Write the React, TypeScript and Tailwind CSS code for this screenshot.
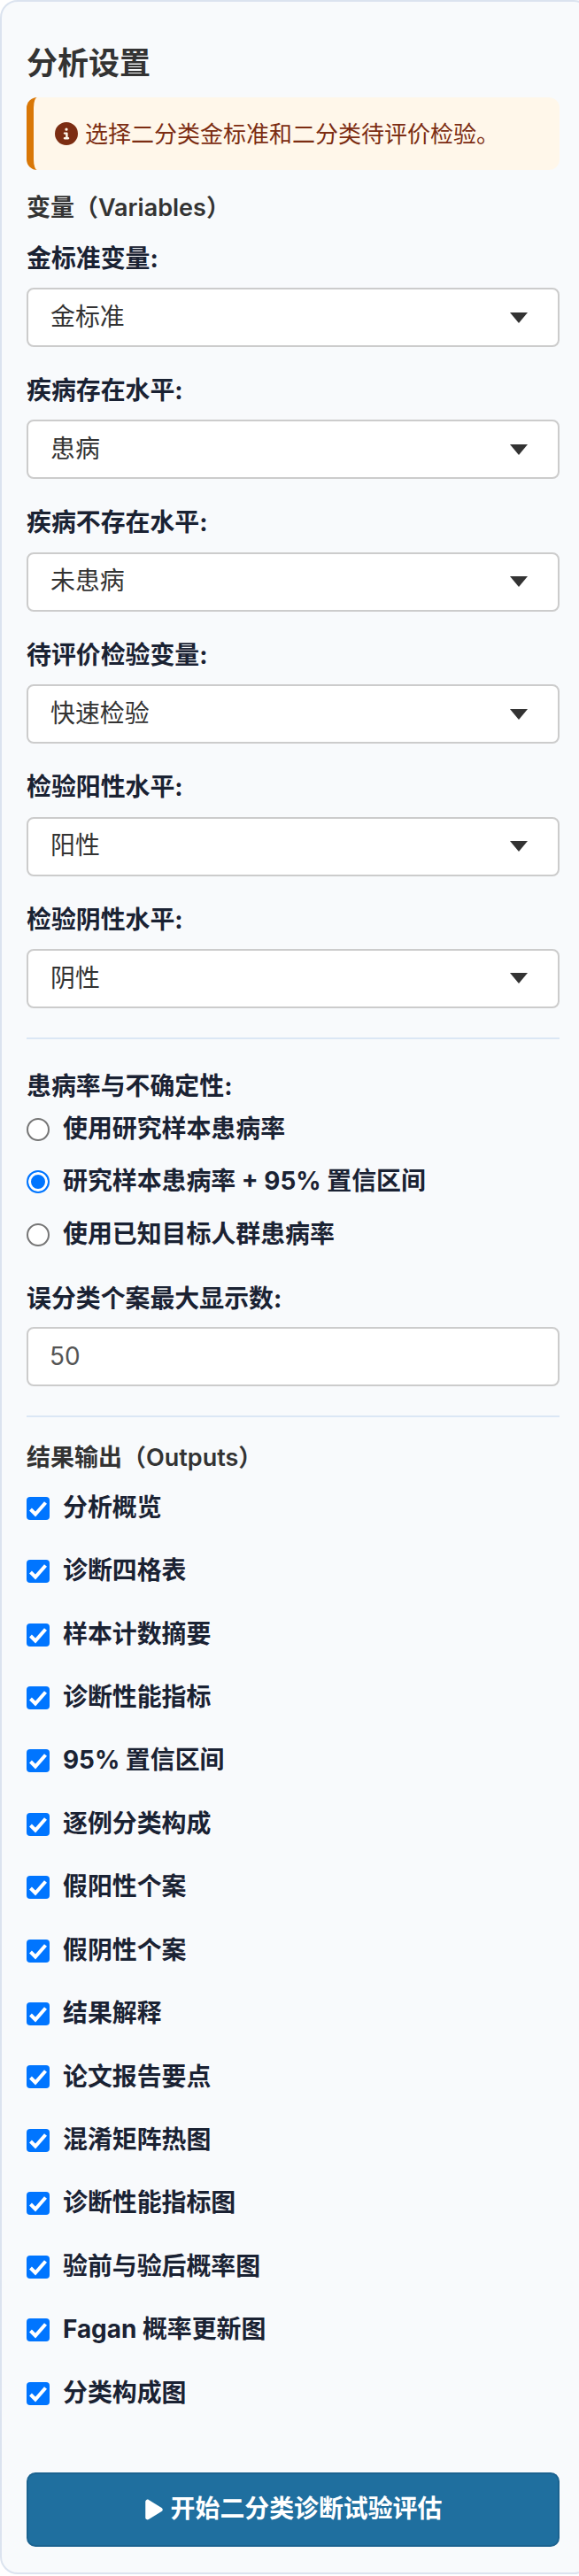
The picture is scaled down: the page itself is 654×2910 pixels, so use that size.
import React from 'react';

const font = "font-['Inter','Noto_Sans_CJK_SC',sans-serif]";

const selects = [
  { label: '金标准变量:', value: '金标准' },
  { label: '疾病存在水平:', value: '患病' },
  { label: '疾病不存在水平:', value: '未患病' },
  { label: '待评价检验变量:', value: '快速检验' },
  { label: '检验阳性水平:', value: '阳性' },
  { label: '检验阴性水平:', value: '阴性' },
];

const radios = ['使用研究样本患病率', '研究样本患病率 + 95% 置信区间', '使用已知目标人群患病率'];

const outputs = [
  '分析概览', '诊断四格表', '样本计数摘要', '诊断性能指标', '95% 置信区间',
  '逐例分类构成', '假阳性个案', '假阴性个案', '结果解释', '论文报告要点',
  '混淆矩阵热图', '诊断性能指标图', '验前与验后概率图', 'Fagan 概率更新图', '分类构成图',
];

function SelectField({ label, value }: { label: string; value: string }) {
  return (
    <div className="flex flex-col">
      <label className="h-[25px] flex items-center text-[27.9px] font-bold text-[#1a2233] mb-[20px]">{label}</label>
      <div className="h-[67px] bg-white border-2 border-[#cccccc] rounded-[8px] pl-[25px] pr-[34px] flex items-center justify-between text-[27.9px] text-[#333333]">
        <span>{value}</span>
        <span className="w-0 h-0 border-x-[10px] border-x-transparent border-t-[12px] border-t-[#333333]" />
      </div>
    </div>
  );
}

export default function App() {
  return (
    <div className={`w-[654px] h-[2910px] overflow-hidden bg-white ${font}`}>
      <div className="w-[668px] h-[2908px] bg-[#f8fafc] border-2 border-[#dbe3ef] rounded-[20px] px-[28px] pt-[50px]">
        <div className="w-[602px] flex flex-col">
          <h2 className="h-[38px] flex items-center text-[35px] font-semibold text-[#333333]">分析设置</h2>
          <div className="mt-[20px] h-[82px] bg-[#fff7ea] border-l-[8px] border-[#d97706] rounded-[12px] pl-[24px] flex items-center text-[26px] text-[#7c2d12]">
            <svg className="w-[26px] h-[26px] mr-[8px] shrink-0" viewBox="0 0 512 512" fill="currentColor">
              <path d="M256 512A256 256 0 1 0 256 0a256 256 0 1 0 0 512zM216 336h24V272H216c-13.3 0-24-10.7-24-24s10.700-24 24-24h48c13.300 0 24 10.700 24 24v88h8c13.300 0 24 10.700 24 24s-10.700 24-24 24H216c-13.300 0-24-10.700-24-24s10.700-24 24-24zm40-208a32 32 0 1 1 0 64 32 32 0 1 1 0-64z" />
            </svg>
            <span>选择二分类金标准和二分类待评价检验。</span>
          </div>
          <h3 className="mt-[30px] h-[26px] flex items-center text-[27px] font-semibold text-[#333333]">变量（Variables）</h3>
          <div className="mt-[32px] flex flex-col gap-[37.4px]">
            {selects.map(s => <SelectField key={s.label} label={s.label} value={s.value} />)}
          </div>
          <hr className="mt-[33px] border-0 h-[2px] bg-[#dbe7f5]" />
          <div className="mt-[41px] h-[25px] flex items-center text-[27.9px] font-bold text-[#1a2233]">患病率与不确定性:</div>
          <div className="mt-[6px] flex flex-col">
            {radios.map((r, i) => (
              <label key={r} className="h-[59.5px] flex items-center gap-[15px] text-[27.9px] font-bold text-[#1a2233]">
                <input
                  type="radio"
                  name="prev"
                  defaultChecked={i === 1}
                  className="appearance-none m-0 w-[26px] h-[26px] shrink-0 rounded-full bg-white border-2 border-[#767676] checked:border-[#0075ff] checked:bg-[#0075ff] checked:shadow-[inset_0_0_0_3px_#ffffff]"
                />
                <span>{r}</span>
              </label>
            ))}
          </div>
          <div className="mt-[30.5px] h-[25px] flex items-center text-[27.9px] font-bold text-[#1a2233]">误分类个案最大显示数:</div>
          <input
            type="number"
            defaultValue={50}
            className="mt-[19px] h-[67px] bg-white border-2 border-[#cccccc] rounded-[8px] px-[24px] text-[27.9px] text-[#555555] outline-none"
          />
          <hr className="mt-[33px] border-0 h-[2px] bg-[#dbe7f5]" />
          <h3 className="mt-[34px] h-[25px] flex items-center text-[27px] font-semibold text-[#333333]">结果输出（Outputs）</h3>
          <div className="mt-[8px] flex flex-col">
            {outputs.map(o => (
              <label key={o} className="h-[71.43px] flex items-center gap-[15px] text-[27.9px] font-bold text-[#1a2233]">
                <span className="relative w-[26px] h-[26px] shrink-0">
                  <input type="checkbox" defaultChecked className="appearance-none block m-0 w-[26px] h-[26px] rounded-[4px] bg-[#0075ff]" />
                  <svg className="absolute inset-0 w-[26px] h-[26px]" viewBox="0 0 26 26" fill="none" stroke="#ffffff" strokeWidth="4">
                    <path d="M4.500 14L10 19.500L21.500 6.500" />
                  </svg>
                </span>
                <span>{o}</span>
              </label>
            ))}
          </div>
          <button className="mt-[54px] h-[84px] bg-[#1f6f9f] border-2 border-[#1b6390] rounded-[10px] flex items-center justify-center gap-[8px] text-[27.9px] font-bold text-white">
            <svg className="w-[22px] h-[26px]" viewBox="0 0 384 512" fill="currentColor">
              <path d="M73 39c-14.800-9.100-33.400-9.400-48.500-.900S0 62.600 0 80V432c0 17.400 9.400 33.400 24.500 41.900s33.700 8.100 48.500-.900L361 297c14.300-8.700 23-24.200 23-41s-8.700-32.200-23-41L73 39z" />
            </svg>
            <span>开始二分类诊断试验评估</span>
          </button>
        </div>
      </div>
    </div>
  );
}
